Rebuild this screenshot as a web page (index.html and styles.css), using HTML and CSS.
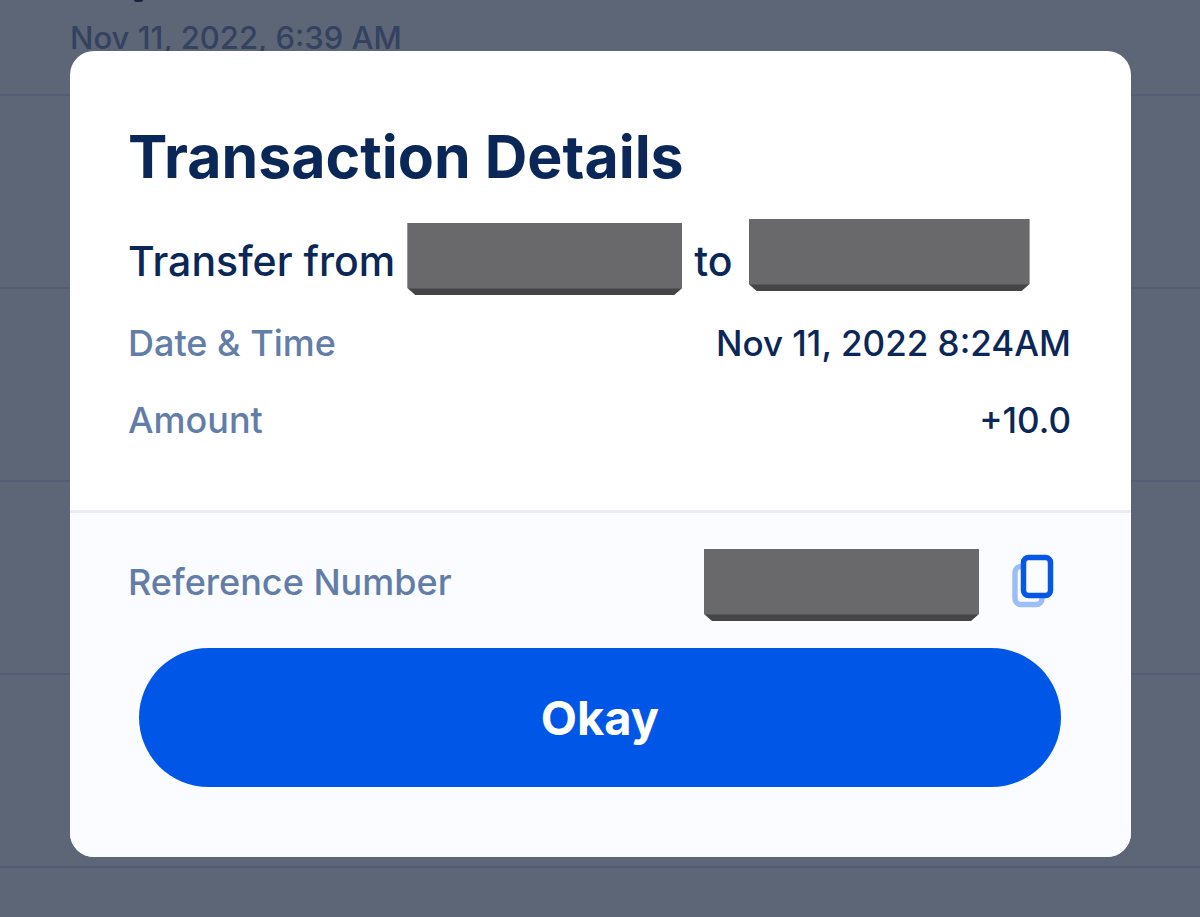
FILE: index.html
```html
<!DOCTYPE html>
<html lang="en">
<head>
<meta charset="utf-8">
<meta name="viewport" content="width=device-width, initial-scale=1">
<title>Transaction Details</title>
<link rel="stylesheet" href="styles.css">
</head>
<body>
<div class="history">
  <div class="entry entry-first"><span class="entry-tail"></span><time class="entry-time">Nov 11, 2022, 6:39 AM</time></div>
  <div class="entry"></div>
  <div class="entry"></div>
  <div class="entry"></div>
  <div class="entry"></div>
</div>
<main class="overlay">
  <section class="dialog" role="dialog" aria-labelledby="title">
    <div class="details">
      <h1 class="title" id="title">Transaction Details</h1>
      <p class="summary"><span class="from">Transfer from</span><span class="redacted"></span><span class="to">to</span><span class="redacted redacted-wide"></span></p>
      <dl class="fields">
        <div class="field"><dt>Date &amp; Time</dt><dd>Nov 11, 2022 8:24AM</dd></div>
        <div class="field"><dt>Amount</dt><dd>+10.0</dd></div>
      </dl>
    </div>
    <div class="footer">
      <div class="reference">
        <span class="reference-label">Reference Number</span>
        <span class="redacted"></span>
        <button class="copy" type="button" aria-label="Copy reference number">
          <svg width="42" height="54" viewBox="0 0 42 54" fill="none" stroke-width="5.500">
            <rect x="3" y="12.500" width="27" height="38" rx="6" stroke="#9dbdf8"/>
            <rect x="11.500" y="3.500" width="27" height="38" rx="5" fill="#fbfcff" stroke="#0757e6"/>
          </svg>
        </button>
      </div>
      <button class="okay" type="button">Okay</button>
    </div>
  </section>
</main>
</body>
</html>
```
FILE: styles.css
```css
* { box-sizing: border-box; }

body {
  margin: 0;
  min-height: 100vh;
  display: grid;
  grid-template-columns: minmax(0, 1fr);
  background: #5d6677;
  color: #0a2757;
  font-family: Inter, "Liberation Sans", sans-serif;
}

.history, .overlay { grid-area: 1 / 1; }

.history { color: #34415f; }

.entry {
  height: 193px;
  border-bottom: 2px solid #535e76;
}

.entry-first {
  height: 96px;
  padding: 0 70px;
}

.entry-tail {
  display: block;
  width: 9px;
  height: 2px;
  margin-left: 64px;
  border-radius: 0 0 5px 5px;
  background: #182641;
}

.entry-time {
  display: block;
  padding-top: 16px;
  font-size: 31px;
  font-weight: 500;
  line-height: 40px;
  white-space: nowrap;
}

.overlay { padding: 51px 69px 59px 70px; }

.dialog {
  overflow: hidden;
  border-radius: 24px;
  background: #fff;
}

.details {
  padding: 72px 60px 68px 58px;
  border-bottom: 3px solid #e9ecf2;
}

.title {
  margin: 0;
  font-size: 59px;
  font-weight: 700;
  line-height: 68px;
}

.summary {
  display: flex;
  align-items: flex-end;
  gap: 12px;
  height: 76px;
  margin: 28px 0 0;
  font-size: 41px;
  font-weight: 500;
  line-height: 68px;
  white-space: nowrap;
}

.redacted {
  flex: none;
  width: 275px;
  height: 72px;
  background: linear-gradient(#69696b 65px, #454547 66px);
  clip-path: polygon(0 0, 100% 0, 100% 65px, calc(100% - 8px) 100%, 8px 100%, 0 65px);
}

.redacted-wide {
  align-self: flex-start;
  width: 281px;
  margin-left: 4px;
}

.fields { margin: 26px 0 0; }

.field {
  display: flex;
  justify-content: space-between;
  font-size: 35px;
  font-weight: 500;
  line-height: 44px;
}

.field + .field { margin-top: 33px; }

.field dt, .reference-label {
  color: #637da9;
  font-size: 36px;
}

.field dd { margin: 0; }

.footer {
  padding: 36px 60px 70px 58px;
  background: #fbfcff;
}

.reference {
  display: flex;
  align-items: center;
  font-weight: 500;
}

.reference-label {
  flex: 1;
  padding-bottom: 6px;
  line-height: 44px;
}

.copy {
  display: flex;
  margin: 0 17px 8px 33px;
  padding: 0;
  border: 0;
  background: none;
}

.okay {
  display: block;
  width: calc(100% - 21px);
  height: 139px;
  margin: 27px 10px 0 11px;
  border: 0;
  border-radius: 70px;
  background: #0057e7;
  color: #fff;
  font: 700 47px Inter, "Liberation Sans", sans-serif;
}
```
